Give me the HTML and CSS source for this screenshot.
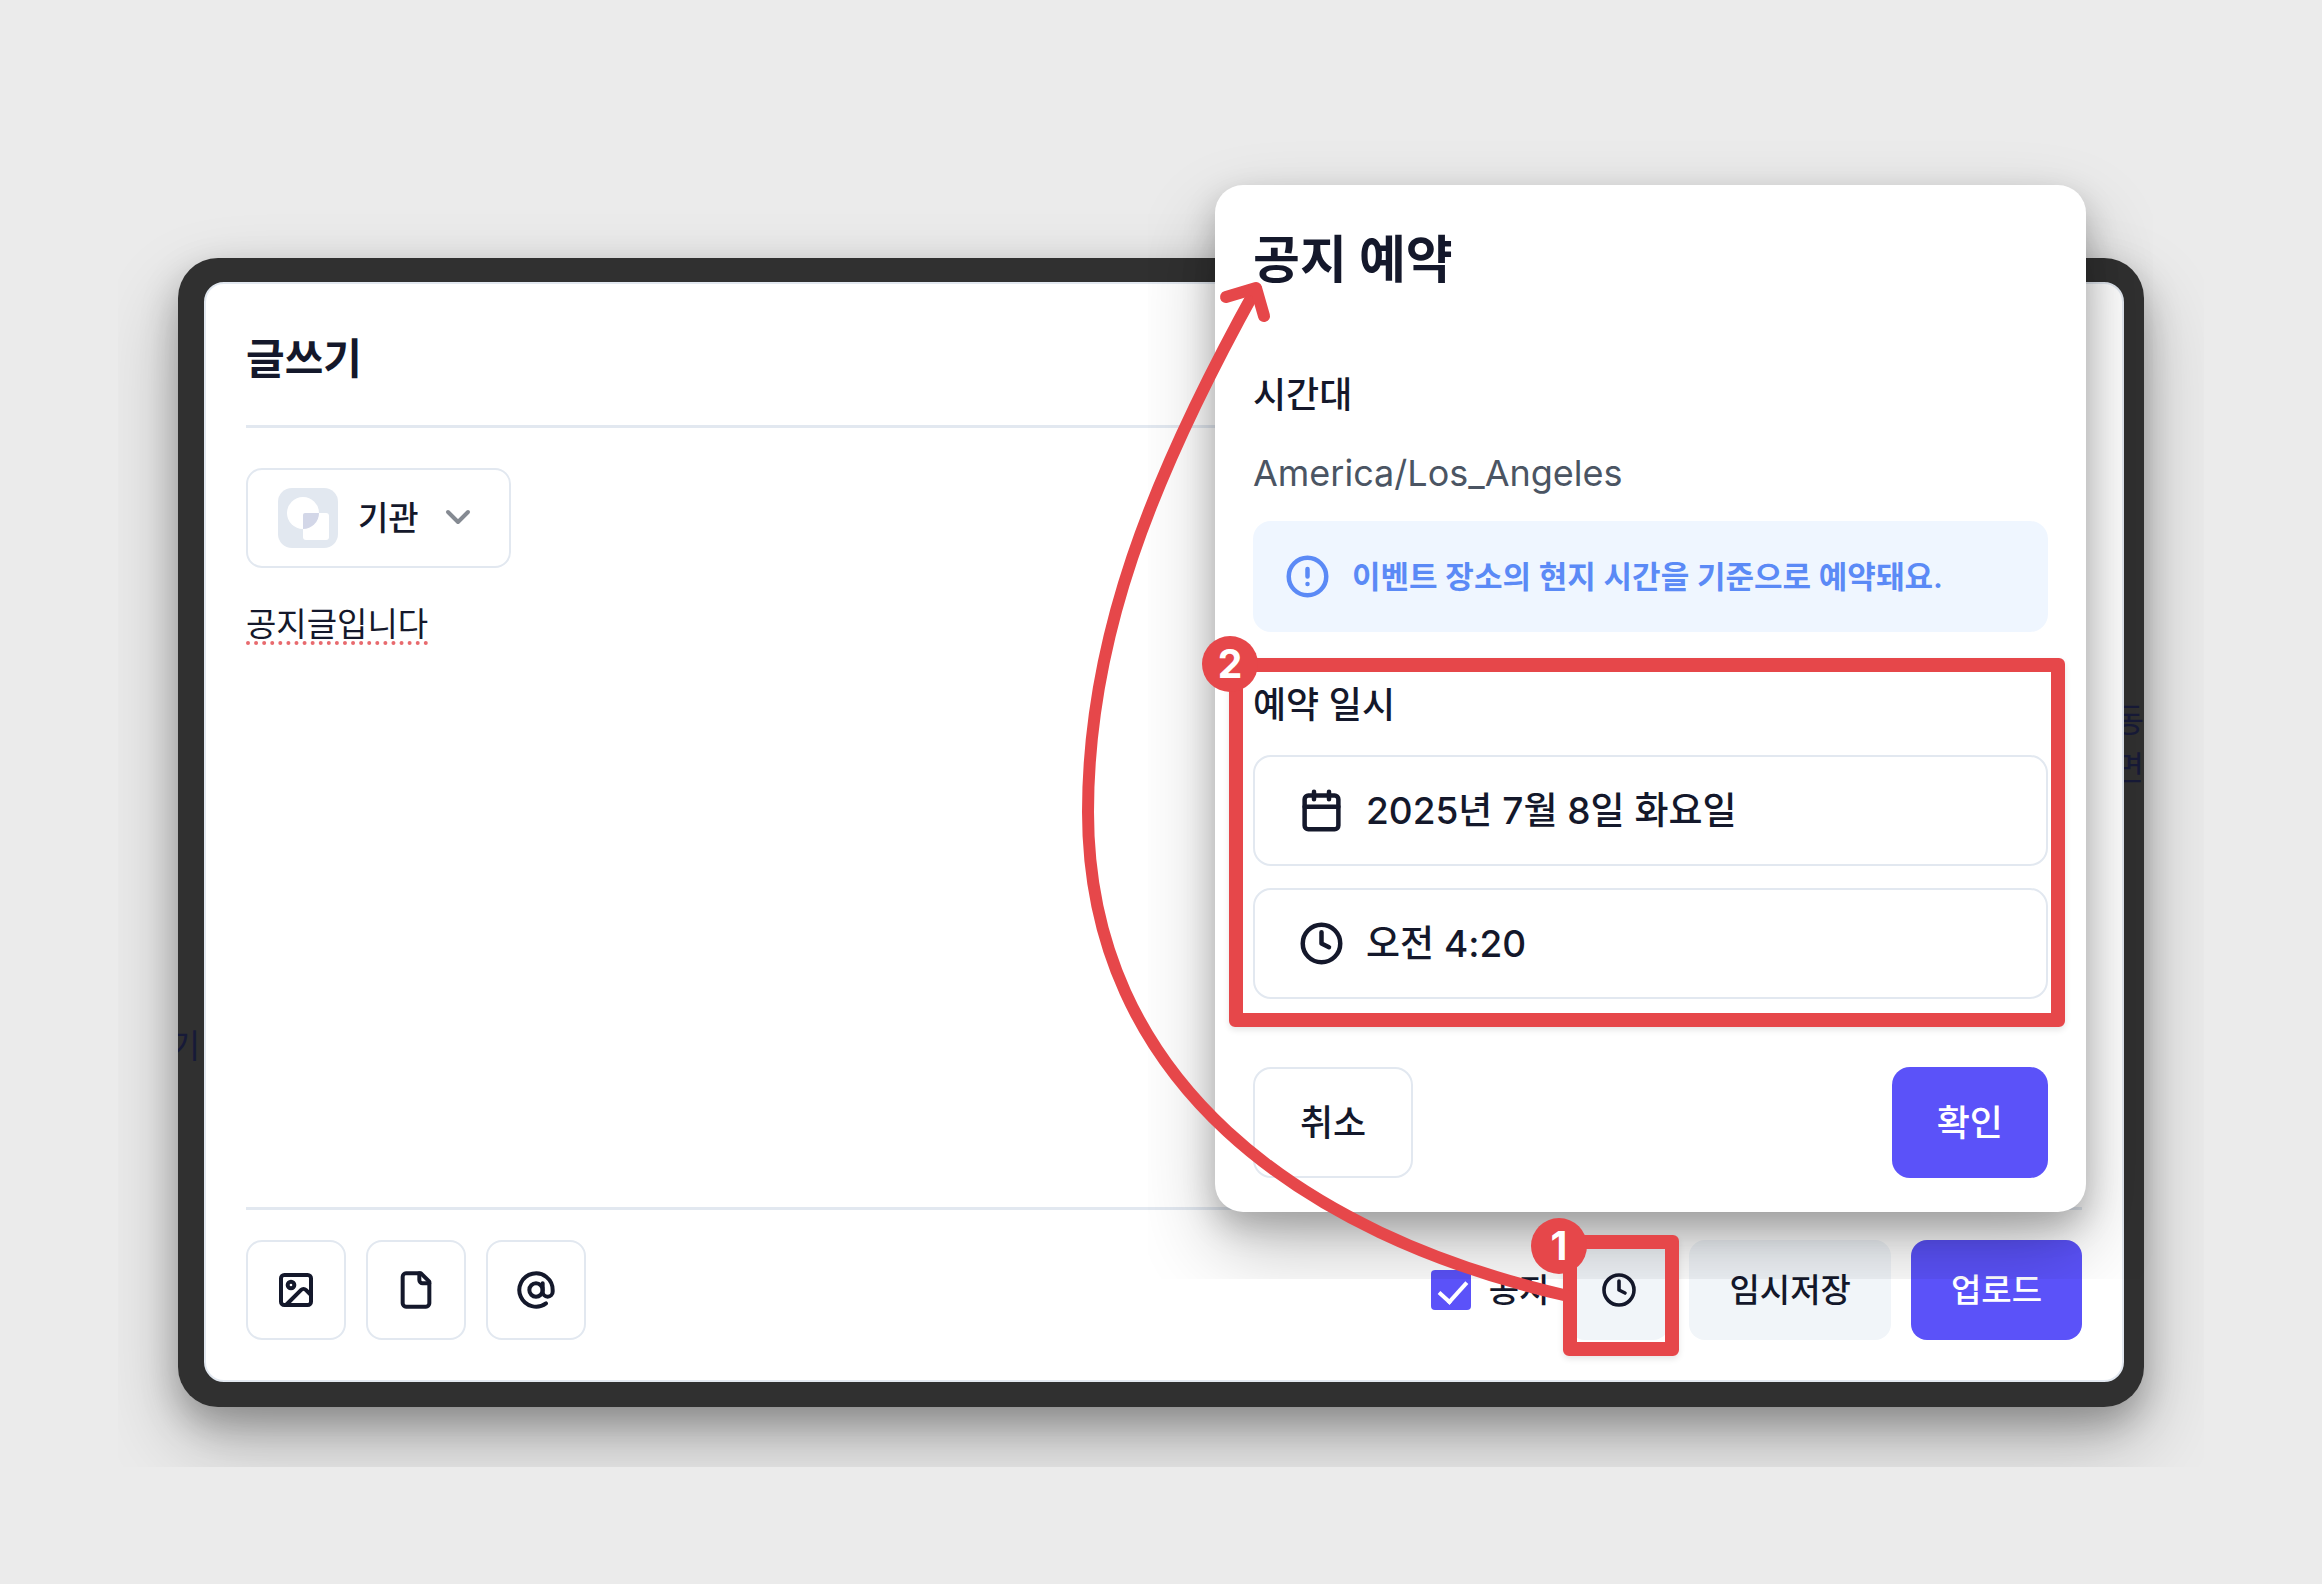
FILE: index.html
```html
<!DOCTYPE html>
<html lang="ko">
<head>
  <meta charset="UTF-8" />
  <meta name="viewport" content="width=device-width, initial-scale=1.0" />
  <title>글쓰기 - 공지 예약</title>
  <link rel="stylesheet" href="styles.css">
</head>
<body>
  <main class="stage">
    <div class="frame">
      <!-- page behind the overlay -->
      <span class="behind behind-left" aria-hidden="true">기</span>
      <span class="behind behind-right" aria-hidden="true">동<br>면</span>

      <section class="composer">
        <h1>글쓰기</h1>
        <div class="composer-body">
          <div class="author">
            <svg class="avatar" viewBox="0 0 60 60" aria-hidden="true">
              <rect width="60" height="60" rx="14" fill="#e2e8f0" />
              <circle cx="25" cy="25" r="16" fill="#fff" />
              <rect x="25" y="25" width="26" height="27" rx="3" fill="#fff" />
              <path d="M25 27a2 2 0 0 1 2-2h14a16 16 0 0 1-16 16z" fill="#d3d7e8" />
            </svg>
            <select class="author-select" aria-label="작성자">
              <option>기관</option>
            </select>
            <svg class="chevron" viewBox="0 0 28 28" aria-hidden="true"><path d="M4 8l10 10L24 8" /></svg>
          </div>
          <textarea class="content" aria-label="내용" spellcheck="false">공지글입니다</textarea>
        </div>
        <div class="toolbar">
          <button class="icon-btn" aria-label="이미지">
            <svg class="icon" viewBox="0 0 24 24"><rect x="3" y="3" width="18" height="18" rx="2" /><circle cx="9" cy="9" r="2" /><path d="M21 15l-3.1-3.1a2 2 0 0 0-2.8 0L6 21" /></svg>
          </button>
          <button class="icon-btn" aria-label="파일">
            <svg class="icon" viewBox="0 0 24 24"><path d="M15 2H6a2 2 0 0 0-2 2v16a2 2 0 0 0 2 2h12a2 2 0 0 0 2-2V7z" /><path d="M14 2v4a2 2 0 0 0 2 2h4" /></svg>
          </button>
          <button class="icon-btn" aria-label="멘션">
            <svg class="icon" viewBox="0 0 24 24"><circle cx="12" cy="12" r="4" /><path d="M16 8v5a3 3 0 0 0 6 0v-1a10 10 0 1 0-4 8" /></svg>
          </button>

          <div class="submit">
            <label class="notice"><input type="checkbox" checked> 공지</label>
            <button class="icon-btn soft" aria-label="예약">
              <svg class="icon icon-sm" viewBox="0 0 24 24"><circle cx="12" cy="12" r="10" /><path d="M12 6v6l4 2" /></svg>
            </button>
            <button class="btn soft">임시저장</button>
            <button class="btn primary">업로드</button>
          </div>
        </div>
      </section>
    </div>

    <section class="modal" role="dialog" aria-labelledby="modal-title">
      <h2 id="modal-title">공지 예약</h2>
      <h3>시간대</h3>
      <p class="timezone">America/Los_Angeles</p>
      <div class="info">
        <svg class="icon icon-lg" viewBox="0 0 24 24" aria-hidden="true"><circle cx="12" cy="12" r="10" /><path d="M12 8v4M12 16h.01" /></svg>
        이벤트 장소의 현지 시간을 기준으로 예약돼요.
      </div>
      <h3 class="date-label">예약 일시</h3>
      <div class="fields">
        <button class="field">
          <svg class="icon icon-lg" viewBox="0 0 24 24" aria-hidden="true"><rect x="3" y="4" width="18" height="18" rx="2" /><path d="M8 2v4M16 2v4M3 10h18" /></svg>
          2025년 7월 8일 화요일
        </button>
        <button class="field">
          <svg class="icon icon-lg" viewBox="0 0 24 24" aria-hidden="true"><circle cx="12" cy="12" r="10" /><path d="M12 6v6l4 2" /></svg>
          오전 4:20
        </button>
      </div>
      <div class="modal-actions">
        <button class="modal-btn outline">취소</button>
        <button class="modal-btn primary">확인</button>
      </div>
    </section>

    <!-- step annotations -->
    <div class="mark mark-clock"></div>
    <div class="mark mark-date"></div>
    <svg class="arrow" viewBox="1080 275 500 1030" aria-hidden="true">
      <path d="M1568 1296C1300 1235 1088 1080 1088 812C1088 640 1150 480 1256 289" />
      <path d="M1226 297L1256 288L1264 316" />
    </svg>
    <span class="step step-1">1</span>
    <span class="step step-2">2</span>
  </main>
</body>
</html>
```
FILE: styles.css
```css
:root {
  --primary: #5b52f9;
  --text: #14182b;
  --line: #e2e8f0;
  --soft: #f1f5f9;
  --mark: #e6474a;
}

* {
  box-sizing: border-box;
}

body {
  margin: 0;
  background: #ebebeb;
  color: var(--text);
  font-family: Inter, 'Noto Sans CJK KR', sans-serif;
}

h1, h2, h3, p {
  margin: 0;
}

button, select, textarea {
  font: inherit;
  color: inherit;
}

button {
  border: none;
  cursor: pointer;
}

.stage {
  position: relative;
  min-height: 100vh;
  padding: 258px 178px 178px;
}

.frame {
  position: relative;
  padding: 24px 20px 25px 26px;
  border-radius: 40px;
  background: #303030;
  box-shadow: 0 36px 80px rgba(0, 0, 0, 0.24), 0 16px 36px rgba(0, 0, 0, 0.26);
  clip-path: inset(-60px);
}

.behind {
  position: absolute;
  overflow: hidden;
  display: flex;
  justify-content: flex-end;
  width: 22px;
  color: #171a38;
  font-size: 33px;
  line-height: 48px;
}

.behind-left {
  left: 0;
  top: 764px;
}

.behind-right {
  right: 0;
  top: 438px;
}

.composer {
  position: relative;
  padding: 51px 40px 40px;
  border: 2px solid var(--line);
  border-radius: 20px;
  background: #fff;
}

.composer h1 {
  padding-bottom: 42px;
  border-bottom: 3px solid var(--line);
  font-size: 42px;
  line-height: 48px;
  font-weight: 700;
}

.composer-body {
  padding-top: 40px;
}

.author {
  position: relative;
  width: 265px;
  height: 100px;
}

.author-select {
  appearance: none;
  width: 100%;
  height: 100%;
  padding: 0 60px 0 110px;
  border: 2px solid var(--line);
  border-radius: 16px;
  background: #fff;
  font-size: 33px;
  font-weight: 500;
}

.avatar, .chevron {
  position: absolute;
  pointer-events: none;
}

.avatar {
  left: 32px;
  top: 20px;
  width: 60px;
}

.chevron {
  right: 39px;
  top: 36px;
  width: 28px;
  fill: none;
  stroke: #858a92;
  stroke-width: 4;
  stroke-linecap: round;
  stroke-linejoin: round;
}

.content {
  display: block;
  width: 100%;
  height: 607px;
  margin-top: 32px;
  padding: 0;
  border: none;
  outline: none;
  resize: none;
  background: none;
  font-size: 33px;
  line-height: 48px;
  text-decoration: underline dotted #e86a6e 4px;
  text-underline-offset: 5px;
  text-decoration-skip-ink: none;
}

.toolbar {
  display: flex;
  align-items: center;
  gap: 20px;
  padding-top: 30px;
  border-top: 3px solid var(--line);
}

.icon-btn {
  display: flex;
  align-items: center;
  justify-content: center;
  width: 100px;
  height: 100px;
  padding: 0;
  border: 2px solid var(--line);
  border-radius: 16px;
  background: #fff;
}

.icon {
  flex: none;
  width: 40px;
  height: 40px;
  fill: none;
  stroke: currentColor;
  stroke-width: 2.4;
  stroke-linecap: round;
  stroke-linejoin: round;
}

.icon-sm {
  width: 36px;
  height: 36px;
}

.icon-lg {
  width: 45px;
  height: 45px;
}

.submit {
  display: flex;
  align-items: center;
  gap: 20px;
  margin-left: auto;
}

.notice {
  display: flex;
  align-items: center;
  gap: 18px;
  font-size: 33px;
  line-height: 44px;
  font-weight: 500;
}

.notice input {
  appearance: none;
  position: relative;
  width: 40px;
  height: 40px;
  margin: 0;
  border-radius: 4px;
  background: var(--primary);
}

.notice input:checked::after {
  content: '';
  position: absolute;
  left: 14px;
  top: 5px;
  width: 12px;
  height: 24px;
  border: solid #fff;
  border-width: 0 4px 4px 0;
  transform: rotate(42deg);
}

.btn {
  height: 100px;
  padding: 0 40px;
  border-radius: 16px;
  font-size: 33px;
  line-height: 44px;
  font-weight: 500;
}

.soft {
  border: none;
  background: var(--soft);
}

.primary {
  background: var(--primary);
  color: #fff;
}

.modal {
  position: absolute;
  top: 185px;
  right: 236px;
  width: 871px;
  padding: 43px 38px 34px;
  border-radius: 28px;
  background: #fff;
  box-shadow: 0 36px 80px rgba(0, 0, 0, 0.24), 0 14px 32px rgba(0, 0, 0, 0.22);
  clip-path: inset(-67px);
}

.modal h2 {
  font-size: 51px;
  line-height: 64px;
  font-weight: 700;
}

.modal h3 {
  margin-top: 81px;
  font-size: 36px;
  line-height: 44px;
  font-weight: 500;
}

.modal .date-label {
  margin-top: 51px;
}

.timezone {
  margin-top: 34px;
  color: #4b5563;
  font-size: 36px;
  line-height: 44px;
}

.info {
  display: flex;
  align-items: center;
  gap: 22px;
  height: 111px;
  margin-top: 26px;
  padding: 0 32px;
  border-radius: 18px;
  background: #eff6ff;
  color: #5b8af6;
  font-size: 31px;
  line-height: 44px;
  font-weight: 600;
}

.fields {
  display: grid;
  gap: 22px;
  margin-top: 28px;
}

.field {
  display: flex;
  align-items: center;
  gap: 22px;
  height: 111px;
  padding: 0 44px;
  border: 2px solid var(--line);
  border-radius: 18px;
  background: #fff;
  font-size: 37px;
  line-height: 44px;
  font-weight: 500;
}

.modal-actions {
  display: flex;
  justify-content: space-between;
  margin-top: 68px;
}

.modal-btn {
  height: 111px;
  padding: 0 45px;
  border-radius: 18px;
  font-size: 36px;
  line-height: 44px;
  font-weight: 500;
}

.outline {
  border: 2px solid var(--line);
  background: #fff;
}

.mark {
  position: absolute;
  border: 14px solid var(--mark);
  border-radius: 6px;
  box-shadow: 0 3px 6px rgba(0, 0, 0, 0.1);
  pointer-events: none;
}

.mark-clock {
  top: 1235px;
  right: 643px;
  width: 116px;
  height: 121px;
}

.mark-date {
  top: 658px;
  right: 257px;
  width: 836px;
  height: 369px;
}

.arrow {
  position: absolute;
  top: 275px;
  right: 742px;
  width: 500px;
  height: 1030px;
  fill: none;
  stroke: var(--mark);
  stroke-width: 12;
  stroke-linecap: round;
  stroke-linejoin: round;
  pointer-events: none;
}

.step {
  position: absolute;
  width: 56px;
  height: 56px;
  border-radius: 50%;
  background: var(--mark);
  color: #fff;
  font-size: 39px;
  line-height: 56px;
  font-weight: 700;
  text-align: center;
}

.step-1 {
  top: 1218px;
  right: 735px;
}

.step-2 {
  top: 636px;
  right: 1064px;
}
```
